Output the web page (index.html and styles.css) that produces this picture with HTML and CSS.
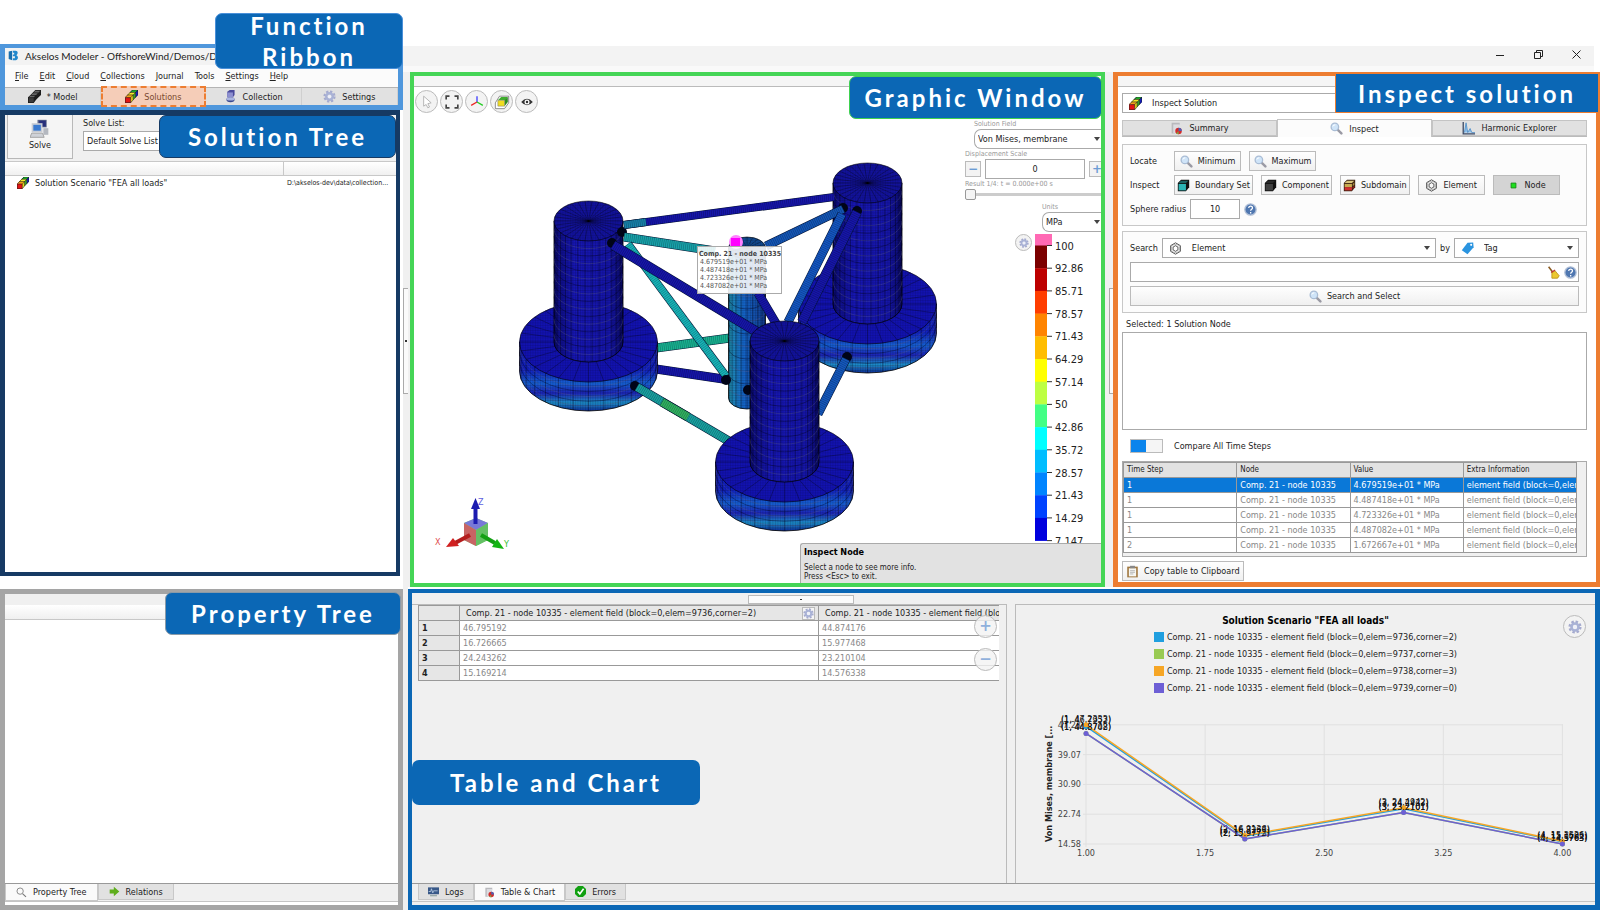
FILE: index.html
```
<!DOCTYPE html>
<html lang="en">
<head>
  <meta charset="utf-8">
  <meta name="viewport" content="width=device-width, initial-scale=1">
  <title>Akselos Modeler</title>
  <link rel="stylesheet" href="styles.css">
</head>

<body>
  <!-- icon sprites -->
  <svg class="sprites" aria-hidden="true">
    <symbol id="i-cubes" viewBox="0 0 16 16">
      <path d="M6 3l3-3h7v6l-3 3H6z" fill="#1a2bd8"/>
      <path d="M6 3l3-3h7l-3 3z" fill="#1fae2a"/><path d="M13 3l3-3v6l-3 3z" fill="#1420c8"/>
      <path d="M3 6l3-3h7v6l-3 3H3z" fill="#e8d81c"/>
      <path d="M3 6l3-3h7l-3 3z" fill="#f4ea28"/><path d="M10 6l3-3v6l-3 3z" fill="#2ea52e"/>
      <path d="M0 9l3-3h7L7 9z" fill="#f0a01c"/><path d="M7 9l3-3v6l-3 4z" fill="#e8d81c"/>
      <path d="M0 9h7v7H0z" fill="#e41414"/>
      <path d="M.4 9.400h6.600v6.200H.4zM.4 9l9-9h6.200v5.800L7 15.600M7 9.400L15.600.4M3 6h7v6M6 3h7v6" fill="none" stroke="#1a1a1a" stroke-width=".7"/>
    </symbol>
    <symbol id="i-darkcubes" viewBox="0 0 16 16">
      <path d="M6 3l3-3h7v6l-3 3-3 3-3 4H0V9l3-3z" fill="#1d1d1d"/>
      <path d="M1 9l2-2h6L7 9zM4 6l2-2h6l-2 2zM7 3l2-2h6l-2 2z" fill="#666"/>
      <path d="M1 10h6v5H1z" fill="#3c3c3c"/>
    </symbol>
    <symbol id="i-collection" viewBox="0 0 16 16">
      <path d="M4 2l3-2h6v6l-2 3H4z" fill="#4a4a9c"/><path d="M4 3h7v6H4z" fill="#8d8fd0"/>
      <ellipse cx="8" cy="12" rx="5" ry="3" fill="#3a4a90"/><ellipse cx="8" cy="11" rx="5" ry="2" fill="#aab4e0"/>
    </symbol>
    <symbol id="i-gear" viewBox="0 0 16 16">
      <circle cx="8" cy="8" r="6" fill="none" stroke="#a5aace" stroke-width="3" stroke-dasharray="2.7 2"/>
      <circle cx="8" cy="8" r="4" fill="none" stroke="#a9b2d6" stroke-width="3"/>
      <circle cx="8" cy="8" r="2" fill="#eef0fa"/>
    </symbol>
    <symbol id="i-lens" viewBox="0 0 16 16">
      <path d="M9 9l5 5" stroke="#9a9aa4" stroke-width="3" stroke-linecap="round"/>
      <circle cx="6" cy="6" r="4.6" fill="#cfe4f8" stroke="#a9bcd4" stroke-width="1.6"/>
      <path d="M3.5 5.5a3 3 0 0 1 3-2" fill="none" stroke="#fff" stroke-width="1.2"/>
    </symbol>
    <symbol id="i-lens-line" viewBox="0 0 16 16">
      <path d="M9.5 9.5l5 5" stroke="#777" stroke-width="1.6"/>
      <circle cx="6" cy="6" r="4.6" fill="none" stroke="#888" stroke-width="1.4"/>
    </symbol>
    <symbol id="i-report" viewBox="0 0 16 16">
      <path d="M2 1h10v3H6v10H2z" fill="#b9b9bd"/><path d="M4 3h8v11H4z" fill="#dcdce0"/>
      <circle cx="10.500" cy="11" r="4" fill="#d42a2a"/><path d="M10.500 11V7a4 4 0 0 1 4 4z" fill="#4a64b8"/>
      <path d="M10.500 11l-3 3a4 4 0 0 0 3 1z" fill="#7ea848"/>
    </symbol>
    <symbol id="i-peaks" viewBox="0 0 16 16">
      <path d="M1.500 0v14.500H16" fill="none" stroke="#3c4a66" stroke-width="1.6"/>
      <path d="M3 13L5 1l2 12 3-5 2 5h4" fill="#8fc0ea" stroke="#4c8cc8"/>
    </symbol>
    <symbol id="i-cube" viewBox="0 0 16 16">
      <path d="M1 5l4-4h10v9l-4 5H1z" fill="#111"/>
      <path d="M2 5l3-3h9l-3 3z" fill="currentColor" opacity=".5"/>
      <path d="M2 6h9v8H2z" fill="currentColor"/>
    </symbol>
    <symbol id="i-subdomain" viewBox="0 0 16 16">
      <path d="M1 5l4-4h10v9l-4 5H1z" fill="#3a2010"/>
      <path d="M2 5l3-3h9l-3 3z" fill="#d8c47c"/><path d="M2 6h9v4H2z" fill="#c8aa50"/>
      <path d="M2 10h9v4H2z" fill="#d03030"/><path d="M12 6l2-2v3l-2 2z" fill="#a88a3c"/><path d="M12 10l2-2v2l-2 3z" fill="#902020"/>
    </symbol>
    <symbol id="i-hex" viewBox="0 0 16 16">
      <g fill="none" stroke="#333"><path d="M8 1l6 3.500v7L8 15l-6-3.500v-7z"/><path d="M8 4.500l3 1.800v3.400L8 11.500 5 9.700V6.300z"/>
      <circle cx="8" cy="8" r="5" stroke="#777" stroke-width=".6"/></g>
    </symbol>
    <symbol id="i-node" viewBox="0 0 16 16"><path d="M5 5h6v6H5z" fill="#1ee01e" stroke="#148014"/></symbol>
    <symbol id="i-help" viewBox="0 0 16 16">
      <circle cx="8" cy="8" r="7" fill="#4f77b0" stroke="#b4c2d8" stroke-width="1.600"/>
      <path d="M5.800 6.200c0-3 4.600-3 4.600-.2 0 1.800-2.200 1.800-2.200 3.600M8.200 11v1.800" fill="none" stroke="#fff" stroke-width="1.600"/>
    </symbol>
    <symbol id="i-tag" viewBox="0 0 16 16">
      <path d="M8 1l7-.5.5 6L8 15 1 10z" fill="#2a94e0"/><circle cx="12.500" cy="3.500" r="1.300" fill="#fff"/>
    </symbol>
    <symbol id="i-broom" viewBox="0 0 16 16">
      <path d="M2 1l6 8" stroke="#8a5a20" stroke-width="2"/>
      <path d="M6 8l4-2 5 6-2 3H6z" fill="#ecc830" stroke="#b48c14"/><path d="M5 8l5-3" stroke="#c03030" stroke-width="1.500"/>
    </symbol>
    <symbol id="i-clipboard" viewBox="0 0 16 16">
      <path d="M1.500 2h13v13.200h-13z" fill="#a07840"/><path d="M3.500 4h9v10h-9z" fill="#f6f6f2"/>
      <path d="M5 1h6v3H5z" fill="#888"/><path d="M5 7h6M5 9h6M5 11h4" stroke="#aaa"/>
    </symbol>
    <symbol id="i-logs" viewBox="0 0 16 16">
      <path d="M0 2h16v10H0z" fill="#385888"/><path d="M1 8h3l1-4 2 6 1-3h6" fill="none" stroke="#cfe0f4"/><path d="M3 13h10v2H3z" fill="#9aa"/>
    </symbol>
    <symbol id="i-check" viewBox="0 0 16 16">
      <path d="M4.500 0h7L16 4.500v7L11.500 16h-7L0 11.500v-7z" fill="#12a012"/><path d="M4 8l3 3.500L12.500 4" fill="none" stroke="#fff" stroke-width="2.400"/>
    </symbol>
    <symbol id="i-arrow" viewBox="0 0 16 16"><path d="M1 5h6V1l8 7-8 7v-4H1z" fill="#5fae1c"/></symbol>
    <symbol id="i-logo" viewBox="0 0 16 16">
      <path d="M1 2l5-1v14l-5-2z" fill="#1a6fae"/><path d="M7 1h4c4 0 4 5 1 6.500C16 9 15 15 10 15H7v-3h3V9H7V6.500h2V4H7z" fill="#2288cc"/>
    </symbol>
    <symbol id="i-computers" viewBox="0 0 24 24">
      <path d="M9 1h11v9H9z" fill="#5a6488"/><path d="M11 2h8v7h-8z" fill="#27307c"/>
      <path d="M2 5h13v11H2z" fill="#c8ccd4"/><path d="M4 7h9v7H4z" fill="#3a7ad0"/>
      <path d="M16 11h6v8h-6z" fill="#b4b8c0"/><path d="M2 17h13l2 5H0z" fill="#cfd2d8" stroke="#999"/>
    </symbol>
    <symbol id="i-caret" viewBox="0 0 8 8"><path d="M1 2h6L4 6z" fill="#444"/></symbol>
  </svg>

  <div class="app">
    <div class="left">
      <section class="frame ribbon">
        <div class="titlebar"><svg class="icon"><use href="#i-logo"/></svg>Akselos Modeler - OffshoreWind/Demos/D</div>
        <nav class="menu">
          <button><u>F</u>ile</button><button><u>E</u>dit</button><button><u>C</u>loud</button><button><u>C</u>ollections</button><button><u>J</u>ournal</button><button>Tools</button><button><u>S</u>ettings</button><button><u>H</u>elp</button>
        </nav>
        <div class="modes">
          <button><svg class="icon"><use href="#i-darkcubes"/></svg>* Model</button>
          <button class="current"><svg class="icon"><use href="#i-cubes"/></svg>Solutions</button>
          <button><svg class="icon"><use href="#i-collection"/></svg>Collection</button>
          <button><svg class="icon"><use href="#i-gear"/></svg>Settings</button>
        </div>
        <h2 class="tag tag-ribbon">Function Ribbon</h2>
      </section>

      <section class="frame tree">
        <div class="solve-bar">
          <button class="solve"><svg><use href="#i-computers"/></svg>Solve</button>
          <div class="solve-list">
            <label for="solve-list">Solve List:</label>
            <select id="solve-list"><option>Default Solve List</option></select>
          </div>
        </div>
        <div class="tree-head"><span></span><span></span></div>
        <div class="tree-row">
          <svg class="icon"><use href="#i-cubes"/></svg>
          <span class="name">Solution Scenario "FEA all loads"</span>
          <span class="path">D:\akselos-dev\data\collection...</span>
        </div>
        <h2 class="tag tag-tree">Solution Tree</h2>
      </section>

      <section class="frame property">
        <div class="prop-head"></div>
        <div class="prop-body"></div>
        <div class="tabs">
          <button class="current"><svg class="icon"><use href="#i-lens-line"/></svg>Property Tree</button>
          <button><svg class="icon"><use href="#i-arrow"/></svg>Relations</button>
        </div>
        <h2 class="tag tag-property">Property Tree</h2>
      </section>
    </div>

    <div class="splitter"><button class="grip" aria-label="Collapse tree"></button></div>

    <div class="right">
      <header class="window-bar">
        <svg viewBox="0 0 86 10"><g fill="none" stroke="#222"><path d="M0 5.500h8"/><path d="M38.500 2.500h6v6h-6zM40.500 2.500v-2h6v6h-2"/><path d="M76.500.5l8 8M84.500.5l-8 8"/></g></svg>
      </header>

      <div class="work">
        <section class="frame graphic">
          <div class="strip"></div>
          <div class="viewport">
            <svg class="scene" id="scene" viewBox="414 87 687 496" preserveAspectRatio="xMidYMid meet"></svg>
            <div class="tools">
              <button aria-label="Select"><svg viewBox="0 0 24 24"><path d="M8 5v12l3-2 2 4 2-1-2-4 4-1z" fill="#fff" stroke="#aaa"/></svg></button>
              <button aria-label="Fit"><svg viewBox="0 0 24 24"><path d="M5 9V5h4M15 5h4v4M19 15v4h-4M9 19H5v-4" fill="none" stroke="#444" stroke-width="2"/></svg></button>
              <button aria-label="Axes"><svg viewBox="0 0 24 24" fill="none" stroke-width="1.500"><path d="M12 12V5" stroke="#33f"/><path d="M12 12l-7 4" stroke="#e22"/><path d="M12 12l7 4" stroke="#2c2"/></svg></button>
              <button aria-label="Clip"><svg viewBox="0 0 24 24"><path d="M4 20v-7l5-8h11v8l-5 7z" fill="#fff" stroke="#777"/><path d="M7 10l4-4h8l-3 4z" fill="#3fae2c"/><path d="M15 10l4-4v6l-4 5z" fill="#2c8c20"/><path d="M7 10h8v7H7z" fill="#f0dc20" stroke="#777" stroke-width=".6"/></svg></button>
              <button aria-label="Visibility"><svg viewBox="0 0 24 24"><path d="M5 12q7-8 14 0-7 8-14 0z" fill="#333"/><circle cx="12" cy="12" r="3" fill="#fff"/><circle cx="12" cy="12" r="1.500" fill="#333"/></svg></button>
            </div>

            <div class="result-controls">
              <div class="field">
                <label for="field">Solution Field</label>
                <div class="pick open-end"><select id="field"><option>Von Mises, membrane</option></select><svg class="caret"><use href="#i-caret"/></svg></div>
              </div>
              <label for="scale">Displacement Scale</label>
              <div class="stepper">
                <button aria-label="Less">&minus;</button><input id="scale" value="0"><button aria-label="More">+</button>
              </div>
              <label for="step">Result 1/4: t = 0.000e+00 s</label>
              <input type="range" id="step" min="1" max="4" value="1">
              <div class="units">
                <label for="units">Units</label>
                <div class="pick open-end"><select id="units"><option>MPa</option></select><svg class="caret"><use href="#i-caret"/></svg></div>
              </div>
              <div class="legend">
                <button class="round small" aria-label="Legend settings"><svg><use href="#i-gear"/></svg></button>
                <svg id="colorbar" class="colorbar" viewBox="0 0 64 312" width="64" height="312"></svg>
              </div>
            </div>
            <div class="hint">
              <b>Inspect Node</b>
              <p>Select a node to see more info.<br>Press &lt;Esc&gt; to exit.</p>
            </div>
          </div>
          <h2 class="tag tag-graphic">Graphic Window</h2>
        </section>

        <button class="grip grip-right" aria-label="Collapse panel"></button>

        <section class="frame inspect">
          <div class="strip"></div>
          <div class="inspect-body">
            <div class="pick title-pick"><svg class="icon"><use href="#i-cubes"/></svg><select aria-label="Panel"><option>Inspect Solution</option></select></div>
            <div class="inspect-tabs">
              <button><svg class="icon"><use href="#i-report"/></svg>Summary</button>
              <button class="current"><svg class="icon"><use href="#i-lens"/></svg>Inspect</button>
              <button><svg class="icon"><use href="#i-peaks"/></svg>Harmonic Explorer</button>
            </div>

            <div class="group">
              <div class="line">
                <span class="caption">Locate</span>
                <button class="btn"><svg class="icon"><use href="#i-lens"/></svg>Minimum</button>
                <button class="btn"><svg class="icon"><use href="#i-lens"/></svg>Maximum</button>
              </div>
              <div class="line">
                <span class="caption">Inspect</span>
                <button class="btn"><svg class="icon teal"><use href="#i-cube"/></svg>Boundary Set</button>
                <button class="btn"><svg class="icon dark"><use href="#i-cube"/></svg>Component</button>
                <button class="btn"><svg class="icon"><use href="#i-subdomain"/></svg>Subdomain</button>
                <button class="btn"><svg class="icon"><use href="#i-hex"/></svg>Element</button>
                <button class="btn pressed"><svg class="icon"><use href="#i-node"/></svg>Node</button>
              </div>
              <div class="line tight">
                <label for="radius">Sphere radius</label>
                <input id="radius" class="radius" value="10">
                <svg class="icon"><use href="#i-help"/></svg>
              </div>
            </div>

            <div class="group search">
              <div class="line tight">
                <label for="what">Search</label>
                <div class="pick grow"><svg class="icon"><use href="#i-hex"/></svg><select id="what"><option>Element</option></select><svg class="caret"><use href="#i-caret"/></svg></div>
                <label for="by">by</label>
                <div class="pick by"><svg class="icon"><use href="#i-tag"/></svg><select id="by"><option>Tag</option></select><svg class="caret"><use href="#i-caret"/></svg></div>
              </div>
              <div class="pick"><input type="text" aria-label="Search text"><svg class="icon"><use href="#i-broom"/></svg><svg class="icon"><use href="#i-help"/></svg></div>
              <button class="btn wide"><svg class="icon"><use href="#i-lens"/></svg>Search and Select</button>
            </div>

            <label class="selected" for="selected">Selected: 1 Solution Node</label>
            <textarea id="selected"></textarea>

            <label class="compare"><input type="checkbox" checked>Compare All Time Steps</label>

            <div class="steps-wrap">
              <table class="steps">
                <thead><tr><th>Time Step</th><th>Node</th><th>Value</th><th>Extra Information</th></tr></thead>
                <tbody>
                  <tr class="picked"><td>1</td><td>Comp. 21 - node 10335</td><td>4.679519e+01 * MPa</td><td>element field (block=0,elem=9736,corner=2)</td></tr>
                  <tr><td>1</td><td>Comp. 21 - node 10335</td><td>4.487418e+01 * MPa</td><td>element field (block=0,elem=9737,corner=3)</td></tr>
                  <tr><td>1</td><td>Comp. 21 - node 10335</td><td>4.723326e+01 * MPa</td><td>element field (block=0,elem=9738,corner=3)</td></tr>
                  <tr><td>1</td><td>Comp. 21 - node 10335</td><td>4.487082e+01 * MPa</td><td>element field (block=0,elem=9739,corner=0)</td></tr>
                  <tr><td>2</td><td>Comp. 21 - node 10335</td><td>1.672667e+01 * MPa</td><td>element field (block=0,elem=9736,corner=2)</td></tr>
                </tbody>
              </table>
            </div>
            <button class="btn copy"><svg class="icon"><use href="#i-clipboard"/></svg>Copy table to Clipboard</button>
          </div>
          <h2 class="tag tag-inspect">Inspect solution</h2>
        </section>
      </div>

      <section class="frame results">
        <div class="results-top"><button aria-label="Collapse results"></button></div>
        <div class="results-body">
          <div class="data">
            <table>
              <thead><tr><th></th><th>Comp. 21 - node 10335 - element field (block=0,elem=9736,corner=2)<button class="cog" aria-label="Column settings"><svg><use href="#i-gear"/></svg></button></th><th>Comp. 21 - node 10335 - element field (block=0,elem=9737,corner=3)</th></tr></thead>
              <tbody>
                <tr><th>1</th><td>46.795192</td><td>44.874176</td></tr>
                <tr><th>2</th><td>16.726665</td><td>15.977468</td></tr>
                <tr><th>3</th><td>24.243262</td><td>23.210104</td></tr>
                <tr><th>4</th><td>15.169214</td><td>14.576338</td></tr>
              </tbody>
            </table>
            <div class="zoomers"><button class="round" aria-label="Add">+</button><button class="round" aria-label="Remove">&minus;</button></div>
          </div>
          <div class="chart">
            <h3>Solution Scenario "FEA all loads"</h3>
            <ul>
              <li class="s1">Comp. 21 - node 10335 - element field (block=0,elem=9736,corner=2)</li>
              <li class="s2">Comp. 21 - node 10335 - element field (block=0,elem=9737,corner=3)</li>
              <li class="s3">Comp. 21 - node 10335 - element field (block=0,elem=9738,corner=3)</li>
              <li class="s4">Comp. 21 - node 10335 - element field (block=0,elem=9739,corner=0)</li>
            </ul>
            <svg id="plot" viewBox="1016 708 579 160"></svg>
            <button class="round chart-cog" aria-label="Chart settings"><svg><use href="#i-gear"/></svg></button>
          </div>
        </div>
        <div class="tabs">
          <button><svg class="icon"><use href="#i-logs"/></svg>Logs</button>
          <button class="current"><svg class="icon"><use href="#i-report"/></svg>Table &amp; Chart</button>
          <button><svg class="icon"><use href="#i-check"/></svg>Errors</button>
        </div>
        <h2 class="tag tag-results">Table and Chart</h2>
      </section>
    </div>
  </div>

  <script src="script.js"></script>
</body>
</html>
```
FILE: styles.css
```
* {
  box-sizing: border-box;
}

body {
  margin: 0;
  background: #fff;
  color: #222;
  font: 9px/12px "DejaVu Sans Condensed", "Noto Sans", sans-serif;
}

button, input, select, textarea {
  margin: 0;
  padding: 0;
  border: 0;
  border-radius: 0;
  background: none;
  color: inherit;
  font: inherit;
}

h2, h3, p, ul {
  margin: 0;
  padding: 0;
}

.sprites {
  position: absolute;
  width: 0;
  height: 0;
}

.icon {
  width: 13px;
  height: 13px;
  flex: none;
}

.app {
  display: grid;
  grid-template-columns: 403px 5px minmax(0, 1fr);
  min-height: 100vh;
  padding-top: 44px;
}

.left {
  display: grid;
  grid-template-rows: 66px minmax(0, 466fr) minmax(0, 13fr) minmax(0, 321fr);
}

.right {
  display: grid;
  grid-template-columns: minmax(0, 1fr);
  grid-template-rows: 28px minmax(0, 515fr) 2px minmax(0, 321fr);
}

.frame {
  position: relative;
  z-index: 1;
  display: flex;
  flex-direction: column;
  min-width: 0;
  border: 5px solid;
}

/* blue captions over each area */
.tag {
  position: absolute;
  z-index: 5;
  display: flex;
  align-items: center;
  justify-content: center;
  height: 43px;
  border: 1px solid;
  border-radius: 7px;
  background: #0b67b5;
  color: #fff;
  font: bold 24px/31px Lato, sans-serif;
  letter-spacing: 3px;
  text-align: center;
}

.tag-ribbon {
  top: -35px;
  right: -5px;
  width: 188px;
  height: 56px;
  border-color: #4a90d9;
}

.tag-tree {
  top: 0;
  right: 0;
  width: 237px;
  border-color: #163a64;
}

.tag-property {
  top: -2px;
  right: -3px;
  width: 236px;
  border-color: #8a9aa8;
}

.tag-graphic {
  top: 0;
  right: -1px;
  width: 253px;
  border-color: #3fd150;
}

.tag-inspect {
  top: -3px;
  right: -3px;
  width: 264px;
  height: 40px;
  border-color: #ed7d31;
  border-radius: 0;
}

.tag-results {
  top: 167px;
  left: 0;
  width: 288px;
  height: 45px;
  border: 0;
}

/* ribbon */
.ribbon {
  border-width: 4px 5px 5px;
  border-color: #4f97dc;
  background: #fbfbfb;
}

.titlebar {
  display: flex;
  align-items: center;
  gap: 6px;
  height: 17px;
  padding: 0 0 2px 3px;
  background: #f3f3f3;
  font: 10px/14px Lato, sans-serif;
  white-space: nowrap;
}

.titlebar .icon {
  width: 11px;
  height: 11px;
}

.menu {
  display: flex;
  gap: 11px;
  height: 22px;
  padding-left: 10px;
}

.menu button {
  white-space: nowrap;
}

.modes {
  display: grid;
  grid-template-columns: 24fr 26fr 24fr 24fr;
  flex: 1;
  border-top: 1px solid #b4b4b4;
  background: #e1e1e1;
}

.modes button {
  display: flex;
  align-items: center;
  justify-content: center;
  gap: 6px;
  border-right: 1px solid #cfcfcf;
}

.modes .current {
  margin: -2px 0;
  border: 2px dashed #ed7d31;
  background: #f5cdb8;
  color: #7a4a30;
}

/* solution tree */
.tree {
  margin-right: 3px;
  border-width: 5px 4px 4px 5px;
  border-color: #163a64;
}

.solve-bar {
  display: flex;
  gap: 10px;
  height: 46px;
  padding-left: 2px;
  background: #f0f0f0;
}

.solve {
  display: flex;
  flex-direction: column;
  align-items: center;
  justify-content: center;
  width: 66px;
  height: 44px;
  padding-bottom: 4px;
  border: 1px solid #b8b8b8;
  border-top: 0;
  background: #f5f5f5;
}

.solve svg {
  width: 20px;
  height: 20px;
}

.solve-list {
  display: flex;
  flex-direction: column;
  gap: 2px;
  flex: 1;
  padding-top: 2px;
}

.solve-list select {
  appearance: none;
  height: 20px;
  padding-left: 3px;
  border: 1px solid #aaa;
  background: #fff;
}

.tree-head {
  display: grid;
  grid-template-columns: 278px 1fr;
  height: 15px;
  border: solid #c8c8c8;
  border-width: 1px 0;
  background: linear-gradient(#fff, #f0f0f0);
}

.tree-head span + span {
  border-left: 1px solid #c8c8c8;
}

.tree-row {
  display: flex;
  align-items: center;
  gap: 6px;
  height: 14px;
  padding-left: 12px;
}

.tree-row .icon {
  width: 12px;
  height: 12px;
}

.tree-row .name {
  width: 246px;
}

.tree-row .path {
  font-size: 7px;
  white-space: nowrap;
}

/* property tree */
.property {
  grid-row: 4;
  border-color: #a5a5a5;
}

.prop-head {
  height: 26px;
  border-top: 11px solid #f0f0f0;
  border-bottom: 1px solid #c8c8c8;
  background: linear-gradient(#fff, #f0f0f0);
}

.prop-body {
  flex: 1;
}

.tabs {
  display: flex;
  align-items: flex-start;
  height: 19px;
  margin-bottom: 3px;
  border-top: 1px solid #999;
  border-bottom: 1px solid #c4c4c4;
  background: #f0f0f0;
}

.tabs button {
  display: flex;
  align-items: center;
  gap: 6px;
  height: 16px;
  padding: 0 10px;
  border: 1px solid #c8c8c8;
  border-top: 0;
  background: #e1e1e1;
  white-space: nowrap;
}

.tabs .current {
  height: 17px;
  background: #fafafa;
}

.tabs .icon {
  width: 11px;
  height: 11px;
}

/* window chrome */
.splitter {
  display: flex;
  align-items: center;
  justify-content: flex-end;
  margin-top: 2px;
  padding-bottom: 275px;
  background: #f0f0f0;
}

.window-bar {
  display: flex;
  justify-content: flex-end;
  margin: 2px 6px 0 -5px;
  border-bottom: 6px solid #f9f9f9;
  background: #f3f3f3;
}

.window-bar svg {
  width: 86px;
  height: 10px;
  margin: 4px 12px 0 0;
}

.work {
  display: grid;
  grid-template-columns: minmax(0, 695fr) 8px minmax(0, 487fr);
  padding-left: 2px;
  background: #f0f0f0;
}

.strip {
  flex: none;
  height: 11px;
  border-bottom: 1px solid #bbb;
  background: #f5f5f5;
}

.grip {
  flex: none;
  width: 5px;
  height: 106px;
  border: 1px solid #aaa;
  border-right: 0;
  background: radial-gradient(circle, #333 1px, #fafafa 1px);
}

.grip-right {
  align-self: center;
  width: 12px;
  margin: 22px 0 0 4px;
}

/* graphic window */
.graphic {
  border-width: 4px;
  border-color: #45d556;
  background: #fff;
}

.viewport {
  position: relative;
  display: flex;
  flex: 1;
  justify-content: space-between;
  min-height: 0;
}

.scene {
  position: absolute;
  inset: 0;
  width: 100%;
  height: 100%;
}

.tools {
  position: relative;
  display: flex;
  gap: 2px;
  padding: 3px 1px;
}

.tools button, .round {
  display: flex;
  align-items: center;
  justify-content: center;
  width: 23px;
  height: 23px;
  border: 1px solid #bbb;
  border-radius: 50%;
  background: #f3f3f3;
}

.tools svg {
  width: 20px;
  height: 20px;
}

.round {
  color: #8fb0dc;
  font: bold 15px/15px "DejaVu Sans", sans-serif;
}

.round svg {
  width: 14px;
  height: 14px;
}

.small {
  width: 17px;
  height: 17px;
}

.small svg {
  width: 10px;
  height: 10px;
}

.result-controls {
  position: relative;
  display: flex;
  flex-direction: column;
  width: 136px;
  padding-top: 32px;
  overflow: hidden;
}

.result-controls label {
  display: block;
  height: 10px;
  color: #999;
  font-size: 7px;
  line-height: 10px;
}

.field {
  margin-left: 9px;
}

.pick {
  display: flex;
  align-items: center;
  height: 20px;
  padding-left: 6px;
  border: 1px solid #aaa;
  background: #fff;
}

.pick select {
  appearance: none;
  flex: 1;
  min-width: 0;
  height: 18px;
  padding-left: 10px;
}

.pick input {
  flex: 1;
  height: 16px;
}

.caret {
  width: 8px;
  height: 8px;
  margin-right: 4px;
}

.open-end {
  padding-left: 3px;
  border-right: 0;
  border-radius: 7px 0 0 7px;
}

.open-end select {
  padding: 0;
}

.open-end .caret {
  margin-right: 0;
}

.stepper {
  display: flex;
  align-items: center;
  gap: 4px;
  height: 20px;
}

.stepper input {
  width: 100px;
  height: 20px;
  border: 1px solid #aaa;
  text-align: center;
}

.stepper button {
  flex: none;
  width: 16px;
  height: 16px;
  border: 1px solid #bbb;
  background: #f3f3f3;
  color: #6c9cd4;
  font: bold 12px/12px "DejaVu Sans", sans-serif;
}

.result-controls input[type=range] {
  appearance: none;
  width: 150px;
  height: 11px;
  background: linear-gradient(#ccc, #ccc) center / 100% 3px no-repeat;
}

.result-controls input[type=range]::-webkit-slider-thumb {
  appearance: none;
  width: 11px;
  height: 11px;
  border: 1px solid #999;
  border-radius: 2px;
  background: #f5f5f5;
}

.units {
  margin: 2px 0 0 77px;
}

.legend {
  display: flex;
  align-items: flex-start;
  gap: 3px;
  padding: 2px 0 0 50px;
}

.colorbar {
  flex: none;
  font-size: 11px;
}

.hint {
  position: absolute;
  right: 0;
  bottom: 0;
  width: 301px;
  height: 40px;
  padding: 2px 3px;
  border: 1px solid #aaa;
  border-width: 1px 0 0 1px;
  border-radius: 3px 0 0 0;
  background: #e2e2e2;
}

.hint b {
  color: #000;
}

.hint p {
  margin-top: 5px;
  font-size: 8px;
  line-height: 9px;
}

/* inspect panel */
.inspect {
  border-color: #ed7d31;
  border-width: 4px 4px 5px 5px;
  background: #fff;
}

.inspect-body {
  display: flex;
  flex-direction: column;
  flex: 1;
  min-height: 0;
  padding: 6px 9px 1px 4px;
}

.title-pick {
  margin-bottom: 7px;
}

.inspect-tabs {
  display: grid;
  grid-template-columns: repeat(3, 1fr);
  height: 17px;
  border-bottom: 1px solid #bbb;
}

.inspect-tabs button {
  display: flex;
  align-items: center;
  justify-content: center;
  gap: 6px;
  border: 1px solid #c4c4c4;
  background: #e1e1e1;
}

.inspect-tabs .current {
  margin: -1px 0;
  border-bottom: 0;
  background: #fcfcfc;
}

.group {
  display: flex;
  flex-direction: column;
  gap: 4px;
  margin-top: 7px;
  padding: 6px 7px;
  border: 1px solid #c8c8c8;
  background: #fcfcfc;
}

.search {
  margin-top: 5px;
}

.line {
  display: flex;
  align-items: center;
  gap: 8px;
}

.tight {
  gap: 4px;
}

.line .caption {
  width: 36px;
}

.btn {
  display: flex;
  align-items: center;
  justify-content: center;
  gap: 5px;
  min-width: 67px;
  height: 20px;
  padding: 0 2px;
  border: 1px solid #bbb;
  background: linear-gradient(#fefefe, #f0f0f0);
  white-space: nowrap;
}

.pressed {
  background: #d4d4d4;
}

.teal {
  color: #2cb4b4;
}

.dark {
  color: #404040;
}

.radius {
  width: 50px;
  height: 20px;
  border: 1px solid #aaa;
  background: #fff;
  text-align: center;
}

.grow {
  flex: 1;
}

.by {
  width: 125px;
}

.search .pick .icon + .icon {
  margin: 0 1px 0 4px;
}

.selected {
  margin: 5px 0 2px 4px;
}

textarea {
  flex: 1;
  min-height: 40px;
  border: 1px solid #aaa;
  resize: none;
}

.compare {
  display: flex;
  align-items: center;
  gap: 11px;
  margin: 9px 0 8px 8px;
}

.compare input {
  appearance: none;
  width: 33px;
  height: 14px;
  border: 1px solid #bbb;
  background: linear-gradient(90deg, #0a84ec 50%, #f5f5f5 50%);
}

.steps-wrap {
  height: 96px;
  padding: 0 9px 8px 0;
  overflow: hidden;
  border: 1px solid #aaa;
  background: #f0f0f0;
}

table {
  border-collapse: collapse;
  table-layout: fixed;
}

th, td {
  overflow: hidden;
  padding: 0 3px;
  border: 1px solid #999;
  text-align: left;
  white-space: nowrap;
}

td {
  background: #fff;
  color: #888;
}

.steps {
  width: 100%;
}

.steps th {
  height: 15px;
  background: #e2e2e2;
  font-size: 8px;
  font-weight: normal;
}

.steps td {
  height: 15px;
}

.steps .picked td {
  background: #0a78d8;
  color: #fff;
}

.copy {
  align-self: flex-start;
  margin-top: 4px;
  padding: 0 3px;
}

/* table and chart */
.results {
  grid-row: 4;
  border-width: 4px 5px 5px 4px;
  border-color: #0b67b5;
  background: #f0f0f0;
}

.results-top {
  height: 11px;
  padding: 2px 0 0 336px;
}

.results-top button {
  display: block;
  width: 106px;
  height: 9px;
  border: 1px solid #bbb;
  background: radial-gradient(circle, #333 1px, #fbfbfb 1px);
}

.results-body {
  display: grid;
  grid-template-columns: minmax(0, 595fr) minmax(0, 580fr);
  gap: 8px;
  flex: 1;
  min-height: 0;
}

.data {
  position: relative;
  padding: 0 7px 0 6px;
  overflow: hidden;
  border-top: 1px solid #bbb;
  border-right: 1px solid #bbb;
}

.data table {
  width: 718px;
}

.data tr {
  height: 15px;
}

.data th:first-child {
  width: 41px;
}

.data th:nth-child(2) {
  width: 359px;
}

.data th {
  background: #e6e6e6;
}

.data thead th {
  padding-left: 6px;
  font-weight: normal;
}

.cog {
  float: right;
  width: 13px;
  height: 13px;
  border: 1px solid #bbb;
  background: #f5f5f5;
}

.cog svg {
  display: block;
  width: 11px;
  height: 11px;
}

.zoomers {
  position: absolute;
  top: 10px;
  right: 9px;
  z-index: 1;
  display: flex;
  flex-direction: column;
  gap: 10px;
}

.zoomers .round {
  background: rgba(243, 243, 243, 0.8);
}

/* covers the clipped table edge */
.data::after {
  content: "";
  position: absolute;
  top: 0;
  right: 0;
  bottom: 0;
  width: 7px;
  background: #f0f0f0;
}

.chart {
  position: relative;
  display: flex;
  flex-direction: column;
  align-items: center;
  border-top: 1px solid #bbb;
  border-left: 1px solid #bbb;
}

.chart h3 {
  margin: 10px 0 4px;
  color: #000;
  font-size: 10px;
  line-height: 12px;
}

.chart ul {
  display: flex;
  flex-direction: column;
  gap: 5px;
  list-style: none;
}

.chart li {
  display: flex;
  align-items: center;
  gap: 3px;
}

.chart li::before {
  content: "";
  width: 10px;
  height: 10px;
  background: currentColor;
}

.s1::before { color: #209fdf; }
.s2::before { color: #99ca53; }
.s3::before { color: #f6a625; }
.s4::before { color: #6d5fd5; }

.chart > svg {
  width: 100%;
  margin-top: auto;
  margin-bottom: 15px;
}

.chart-cog {
  position: absolute;
  top: 10px;
  right: 9px;
}

.results .tabs {
  padding-left: 6px;
}

.results > .tabs button {
  padding: 0 9px;
}
```
FILE: script.js
```
// ---- 3D view ----
var defs = '<defs>' +
  '<pattern id="mesh" width="2.5" height="2.5" patternUnits="userSpaceOnUse"><path d="M0 0H3M0 0V3" stroke="#000" stroke-width=".6" stroke-opacity=".5"/></pattern>' +
  '<linearGradient id="col"><stop offset="0" stop-color="#0c0c78"/><stop offset=".3" stop-color="#1616b4"/><stop offset=".8" stop-color="#1515aa"/><stop offset="1" stop-color="#0a0a68"/></linearGradient>' +
  '<linearGradient id="core"><stop offset="0" stop-color="#2094b4"/><stop offset=".4" stop-color="#1464c8"/><stop offset="1" stop-color="#123c90"/></linearGradient>' +
  '<linearGradient id="rim" x2="0" y2="1"><stop offset=".4" stop-color="#1220c0"/><stop offset=".6" stop-color="#1660d4"/><stop offset=".74" stop-color="#1c24b8"/><stop offset=".88" stop-color="#1c8cc8"/><stop offset="1" stop-color="#0c2c98"/></linearGradient>' +
  '</defs>';

function drum(cx, top, bottom, rx, ry, side, cap, spokes, rings) {
  var i, a, x, y;
  var body = 'M' + (cx - rx) + ' ' + top + 'V' + bottom + 'A' + rx + ' ' + ry + ' 0 0 0 ' + (cx + rx) + ' ' + bottom + 'V' + top + 'Z';
  var out = '<path d="' + body + '" fill="' + side + '" stroke="#000" stroke-width=".8"/>';
  var lines = '';
  for (i = 1; i < spokes; i++) {
    a = Math.PI * i / spokes;
    x = cx + rx * Math.cos(a);
    y = ry * Math.sin(a);
    lines += 'M' + x + ' ' + (top + y) + 'V' + (bottom + y);
  }
  for (i = 1; i < rings; i++) {
    y = top + (bottom - top) * i / rings;
    lines += 'M' + (cx - rx) + ' ' + y + 'A' + rx + ' ' + ry + ' 0 0 0 ' + (cx + rx) + ' ' + y;
  }
  out += '<path d="' + lines + '" fill="none" stroke="#00001c" stroke-width=".6" stroke-opacity=".6"/>';
  // lighter seams between the rings
  lines = '';
  for (i = 0; i < rings; i++) {
    y = top + (bottom - top) * (i + 0.5) / rings;
    lines += 'M' + (cx - rx) + ' ' + y + 'A' + rx + ' ' + ry + ' 0 0 0 ' + (cx + rx) + ' ' + y;
  }
  out += '<path d="' + lines + '" fill="none" stroke="#5a5a90" stroke-width=".6" stroke-opacity=".6"/>';
  out += '<path d="' + body + '" fill="url(#mesh)" opacity=".8"/>';
  out += '<ellipse cx="' + cx + '" cy="' + top + '" rx="' + rx + '" ry="' + ry + '" fill="' + cap + '" stroke="#000" stroke-width=".6"/>';
  lines = '';
  for (i = 0; i < spokes * 2; i++) {
    a = Math.PI * i / spokes;
    lines += 'M' + cx + ' ' + top + 'L' + (cx + rx * Math.cos(a)) + ' ' + (top + ry * Math.sin(a));
  }
  out += '<path d="' + lines + '" stroke="#000" stroke-width=".5" stroke-opacity=".6"/>';
  out += '<ellipse cx="' + cx + '" cy="' + top + '" rx="' + rx + '" ry="' + ry + '" fill="url(#mesh)" opacity=".6"/>';
  return out;
}

function tower(cx, top, bottom) {
  return drum(cx, bottom, bottom + 29, 69, 40, 'url(#rim)', '#1212b0', 14, 3) +
    drum(cx, top, bottom, 34.5, 20, 'url(#col)', '#12129c', 15, 8);
}

function brace(x1, y1, x2, y2, color, w) {
  var line = ' x1="' + x1 + '" y1="' + y1 + '" x2="' + x2 + '" y2="' + y2 + '"';
  w = w || 8;
  return '<line' + line + ' stroke="#001030" stroke-width="' + (w + 1) + '"/>' +
    '<line' + line + ' stroke="' + color + '" stroke-width="' + w + '"/>' +
    '<line' + line + ' stroke="#001" stroke-opacity=".3" stroke-width="' + w + '" stroke-dasharray=".6 1.4"/>';
}

function joint(x, y) {
  return '<circle cx="' + x + '" cy="' + y + '" r="5" fill="#000418"/>';
}

function axes() {
  return '<path d="M464 523l12-5 12 5v17l-12 6-12-6z" fill="#78d078"/>' +
    '<path d="M464 523l12-5 12 5-12 7z" fill="#7878d8"/>' +
    '<path d="M464 523l12 7v16l-12-6z" fill="#c86464"/><path d="M476 530l12-7v17l-12 6z" fill="#64c064"/>' +
    '<path d="M475.500 524V506" stroke="#1c1cb0" stroke-width="4"/><path d="M471 509l4.500-11 4.500 11z" fill="#1c1cb0"/>' +
    '<path d="M470 535l-15 8" stroke="#b41c1c" stroke-width="4"/><path d="M446 547l7-9 6 8z" fill="#d02020"/>' +
    '<path d="M481 535l14 8" stroke="#14a014" stroke-width="4"/><path d="M504 549l-12-2 5-8z" fill="#14b414"/>' +
    '<text x="435" y="545" fill="#e05050">X</text><text x="504" y="547" fill="#30c030">Y</text><text x="478" y="505" fill="#6060e0">Z</text>';
}

function tooltip() {
  var rows = ['4.679519e+01', '4.487418e+01', '4.723326e+01', '4.487082e+01'];
  var out = '<rect x="697.500" y="246.500" width="84" height="47" fill="#fff" fill-opacity=".88" stroke="#aaa"/>' +
    '<text x="699" y="256" font-size="7" font-weight="bold" fill="#444">Comp. 21 - node 10335</text>';
  rows.forEach(function(v, i) {
    out += '<text x="700" y="' + (264 + i * 8) + '" font-size="7" fill="#555">' + v + ' * MPa</text>';
  });
  return out;
}

var dark = '#1616a8';
document.getElementById('scene').innerHTML = defs +
  tower(867.5, 183, 304) +
  joint(847, 357) + brace(846, 359, 818, 414, '#1458bc') +
  brace(656, 348, 730, 338, '#18b090') + brace(656, 369, 730, 380, dark) +
  drum(747, 248, 398, 18.5, 11, 'url(#core)', '#104890', 10, 6) +
  joint(748, 390) +
  brace(758, 293, 777, 325, dark) +
  joint(843, 208) + joint(857, 211) +
  brace(843, 209, 766, 246, '#1456b4') +
  brace(842, 214, 788, 322, '#1456c0') +
  brace(857, 212, 802, 322, dark, 9) +
  tower(588.5, 221, 342) +
  joint(622, 232) + joint(635, 386) + joint(612, 243) +
  brace(624, 225, 834, 197, dark, 7) + brace(624, 225, 646, 222, '#1880a8', 7) +
  brace(624, 237, 715, 251, '#18a0a8') +
  brace(628, 244, 726, 376, '#18b4b8', 7) +
  brace(613, 245, 762, 335, dark, 9) +
  brace(637, 387, 732, 443, '#18a0a0') + brace(662, 402, 688, 417, '#30b060') +
  joint(726, 380) +
  tower(784.5, 341, 462) +
  '<circle cx="736" cy="242" r="7" fill="#ff80ff"/><rect x="731" y="238" width="9" height="9" fill="#f0f"/>' +
  tooltip() + axes();

// ---- colour bar ----
var bands = ['#7b0000', '#bd0000', '#ff3d00', '#ff8400', '#ffbd00', '#ffff00', '#bdff42', '#42ff84', '#00ffff', '#00bdff', '#0084ff', '#0042ff', '#0000de'];
var ticks = ['100', '92.86', '85.71', '78.57', '71.43', '64.29', '57.14', '50', '42.86', '35.72', '28.57', '21.43', '14.29', '7.147'];
var step = 22.7;
var bar = '<rect width="17" height="12" fill="#ff69b4"/>';
bands.forEach(function(c, i) {
  bar += '<rect y="' + (11.5 + i * step) + '" width="12" height="23" fill="' + c + '"/>';
});
ticks.forEach(function(t, i) {
  var y = 11.5 + i * step;
  bar += '<path d="M12 ' + y + 'h5" stroke="#333"/><text x="20" y="' + (y + 4) + '" fill="#222">' + t + '</text>';
});
document.getElementById('colorbar').innerHTML = bar;

// ---- chart ----
var series = [
  { color: '#99ca53', values: [44.8742, 15.9775, 23.2101, 14.5763] },
  { color: '#209fdf', values: [46.7952, 16.7267, 24.2433, 15.1692] },
  { color: '#f6a625', values: [47.2333, 16.9136, 24.4942, 15.3526] },
  { color: '#6d5fd5', values: [44.8708, 15.9772, 23.2101, 14.5763] }
];

function px(x) { return 1086 + (x - 1) * 158.8; }
function py(v) { return 844 - (v - 14.58) * 3.65; }

var plot = '';
[1, 1.75, 2.5, 3.25, 4].forEach(function(x) {
  plot += '<path d="M' + px(x) + ' 724V847" stroke="#e0e0e0"/><text x="' + px(x) + '" y="856" text-anchor="middle" fill="#444">' + x.toFixed(2) + '</text>';
});
[14.58, 22.74, 30.9, 39.07, 47.23].forEach(function(v) {
  plot += '<path d="M1083 ' + py(v) + 'H1562" stroke="#e0e0e0"/><text x="1081" y="' + (py(v) + 3) + '" text-anchor="end" fill="#444">' + v.toFixed(2) + '</text>';
});
plot += '<text transform="translate(1052 842) rotate(-90)" font-weight="bold" fill="#222">Von Mises, membrane [...</text>';
series.forEach(function(s) {
  var pts = s.values.map(function(v, i) { return px(i + 1) + ',' + py(v); });
  plot += '<polyline points="' + pts.join(' ') + '" fill="none" stroke="' + s.color + '" stroke-width="1.500"/>';
  s.values.forEach(function(v, i) {
    plot += '<circle cx="' + px(i + 1) + '" cy="' + py(v) + '" r="2.500" fill="' + s.color + '"/>' +
      '<text x="' + px(i + 1) + '" y="' + (py(v) - 3) + '" text-anchor="middle" fill="#111">(' + (i + 1) + ', ' + v + ')</text>';
  });
});
document.getElementById('plot').innerHTML = plot;
```
